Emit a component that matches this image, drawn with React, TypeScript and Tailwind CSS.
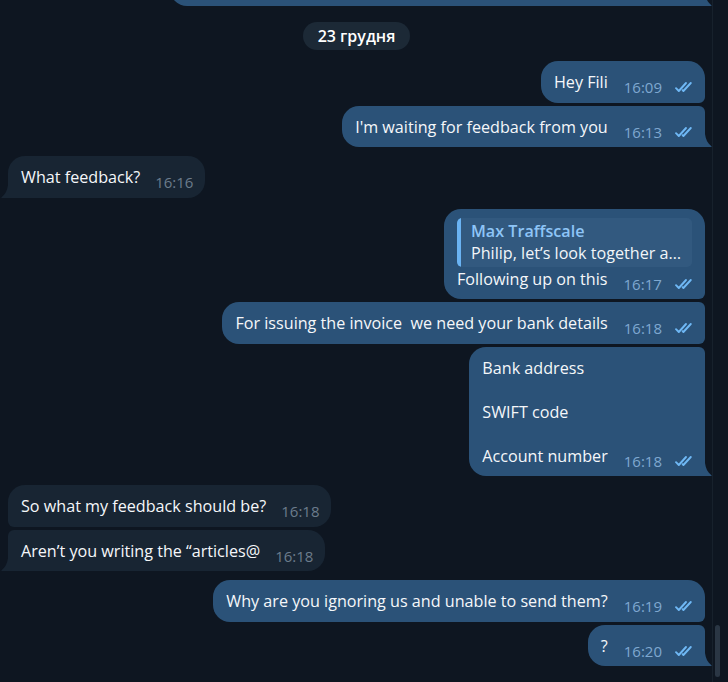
import type { ReactNode } from "react";

type Side = "in" | "out";
type Pos = "single" | "first" | "middle" | "last";

const corners: Record<Side, Record<Pos, string>> = {
  out: {
    single: "rounded-tl-[17px] rounded-tr-[17px] rounded-bl-[17px] rounded-br-none",
    first: "rounded-tl-[17px] rounded-tr-[17px] rounded-bl-[17px] rounded-br-[6px]",
    middle: "rounded-tl-[17px] rounded-tr-[6px] rounded-bl-[17px] rounded-br-[6px]",
    last: "rounded-tl-[17px] rounded-tr-[6px] rounded-bl-[17px] rounded-br-none",
  },
  in: {
    single: "rounded-tl-[17px] rounded-tr-[17px] rounded-br-[17px] rounded-bl-none",
    first: "rounded-tl-[17px] rounded-tr-[17px] rounded-br-[17px] rounded-bl-[6px]",
    middle: "rounded-tl-[6px] rounded-tr-[17px] rounded-br-[17px] rounded-bl-[6px]",
    last: "rounded-tl-[6px] rounded-tr-[17px] rounded-br-[17px] rounded-bl-none",
  },
};

function Checks() {
  return (
    <svg width="22" height="12" viewBox="0 0 22 12" fill="none" stroke="#6fb8f5" strokeWidth="1.9" strokeLinecap="round" strokeLinejoin="round">
      <path d="M2 7.2 L4.8 10 L12 2" />
      <path d="M8.6 9.2 L9.4 10 L16.8 2" />
    </svg>
  );
}

function Tail({ side }: { side: Side }) {
  if (side === "out") {
    return (
      <svg className="absolute bottom-0 left-full" width="7" height="13" viewBox="0 0 7 13">
        <path d="M0 0 C0.6 5 2.6 9.4 6.4 12.2 C6.8 12.5 6.6 13 6.1 13 L0 13 Z" fill="#2b5278" />
      </svg>
    );
  }
  return (
    <svg className="absolute bottom-0 right-full" width="7" height="13" viewBox="0 0 7 13">
      <path d="M7 0 C6.4 5 4.4 9.4 0.6 12.2 C0.2 12.5 0.4 13 0.9 13 L7 13 Z" fill="#182533" />
    </svg>
  );
}

function Meta({ side, time }: { side: Side; time: string }) {
  return (
    <span
      className={
        side === "out"
          ? "ml-4 flex shrink-0 translate-y-[5px] items-center gap-3 text-[15px] leading-[22px] text-[#7fa8d0]"
          : "ml-[15px] flex shrink-0 translate-y-[5px] items-center text-[15px] leading-[22px] text-[#6c7c8c]"
      }
    >
      {time}
      {side === "out" && <Checks />}
    </span>
  );
}

function Bubble({
  side,
  pos,
  time,
  children,
  reply,
}: {
  side: Side;
  pos: Pos;
  time: string;
  children: ReactNode;
  reply?: { name: string; text: string };
}) {
  const tail = pos === "single" || pos === "last";
  return (
    <div className={side === "out" ? "flex justify-end" : "flex justify-start"}>
      <div
        className={`relative pt-[10px] pb-[9.5px] pl-[13px] ${side === "out" ? "bg-[#2b5278] pr-[9px]" : "bg-[#182533] pr-3"} ${corners[side][pos]}`}
      >
        {reply && (
          <div className="-mt-px mb-[1px] mr-1 flex w-[235px] overflow-hidden rounded-[5px] bg-[#32597f]">
            <div className="w-[4px] shrink-0 rounded-l-[5px] bg-[#6ab3f3]" />
            <div className="min-w-0 py-[3px] pl-[10px] pr-2">
              <div className="text-[16.15px] font-semibold leading-[21px] text-[#8ec5f7]">{reply.name}</div>
              <div className="whitespace-nowrap text-[16.15px] leading-[22px] text-[#f1f5f9]">{reply.text}</div>
            </div>
          </div>
        )}
        <div className="flex items-end">
          <div className="whitespace-pre-line text-[16.15px] leading-[22px] text-[#f5f7fa]">{children}</div>
          <Meta side={side} time={time} />
        </div>
        {tail && <Tail side={side} />}
      </div>
    </div>
  );
}

export default function App() {
  return (
    <div
      className="flex h-[682px] w-[728px] overflow-hidden bg-[#0e1621]"
      style={{ fontFamily: '"Open Sans", "Noto Sans", sans-serif' }}
    >
      <div className="flex w-[712px] flex-col pl-[8px] pr-[7px]">
        <div className="-mt-[35px] flex justify-end">
          <div className="relative h-[41px] w-[535px] rounded-tl-[17px] rounded-tr-[6px] rounded-bl-[17px] rounded-br-none bg-[#2b5278]">
            <Tail side="out" />
          </div>
        </div>

        <div className="mt-4 flex justify-center">
          <div className="rounded-full bg-[#1c2936] px-[15px] text-[16px] font-semibold leading-[28px] text-white">
            23 грудня
          </div>
        </div>

        <div className="mt-[11px] flex flex-col gap-[3px]">
          <Bubble side="out" pos="first" time="16:09">Hey Fili</Bubble>
          <Bubble side="out" pos="last" time="16:13">I'm waiting for feedback from you</Bubble>
        </div>

        <div className="mt-[9px]">
          <Bubble side="in" pos="single" time="16:16">What feedback?</Bubble>
        </div>

        <div className="mt-[11px] flex flex-col gap-[3px]">
          <Bubble
            side="out"
            pos="first"
            time="16:17"
            reply={{ name: "Max Traffscale", text: "Philip, let’s look together a…" }}
          >
            Following up on this
          </Bubble>
          <Bubble side="out" pos="middle" time="16:18">For issuing the invoice&nbsp; we need your bank details</Bubble>
          <Bubble side="out" pos="last" time="16:18">{"Bank address\n\nSWIFT code\n\nAccount number"}</Bubble>
        </div>

        <div className="mt-[9px] flex flex-col gap-[3px]">
          <Bubble side="in" pos="first" time="16:18">So what my feedback should be?</Bubble>
          <Bubble side="in" pos="last" time="16:18">Aren’t you writing the “articles@</Bubble>
        </div>

        <div className="mt-[9px] flex flex-col gap-[3px]">
          <Bubble side="out" pos="first" time="16:19">Why are you ignoring us and unable to send them?</Bubble>
          <Bubble side="out" pos="last" time="16:20">?</Bubble>
        </div>
      </div>

      <div className="relative w-[16px] border-l border-[#17212c] bg-[#0e1621]">
        <div className="absolute left-[2px] top-[625px] h-[52px] w-[5px] rounded-full bg-[#2a3644]" />
      </div>
    </div>
  );
}
